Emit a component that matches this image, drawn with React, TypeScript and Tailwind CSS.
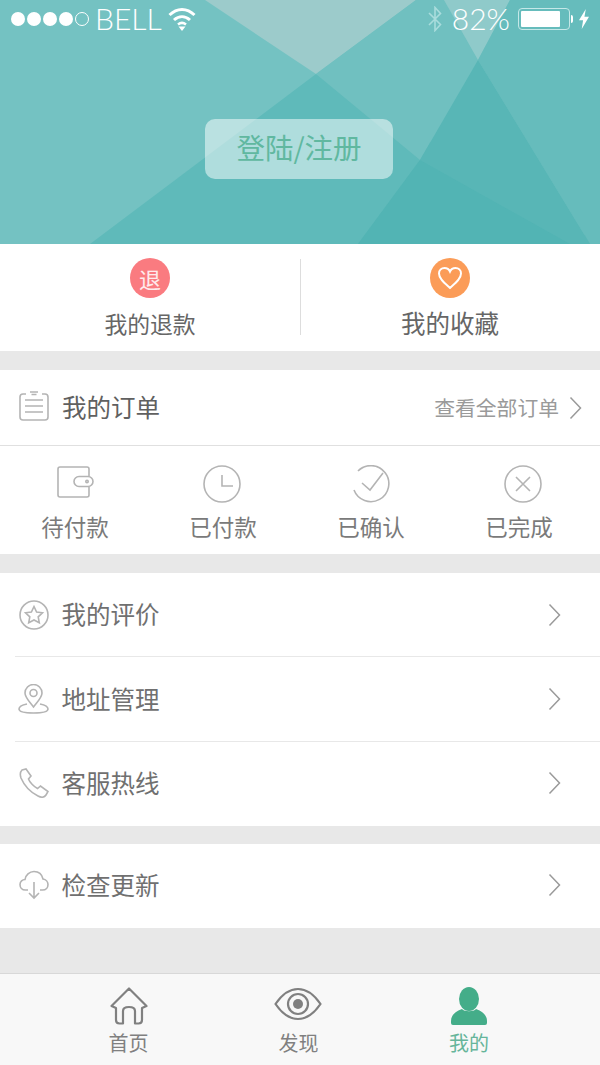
import React from "react";

const cjk = "font-['Noto_Sans_CJK_SC','Noto_Sans',sans-serif]";

function Chevron({ className = "" }: { className?: string }) {
  return (
    <svg width="13" height="24" viewBox="0 0 13 24" fill="none" stroke="#9a9a9a" strokeWidth="1.5" className={className}>
      <path d="M1.5 1.5 L11.5 12 L1.5 22.5" />
    </svg>
  );
}

function HeroBackground() {
  return (
    <svg className="absolute inset-0" width="600" height="244" viewBox="0 0 600 244">
      <rect width="600" height="244" fill="#74c2c2" />
      <polygon points="316,74 600,244 90,244" fill="#5fbaba" />
      <polygon points="205,0 416,0 316,74" fill="#9ccbcb" />
      <polygon points="416,0 444,0 478,60 420,160 316,74" fill="#70c0c0" />
      <polygon points="444,0 510,0 478,60" fill="#8fcaca" />
      <polygon points="510,0 600,0 600,244 590,244 478,60" fill="#66bcbc" />
      <polygon points="478,60 590,244 358,244 420,160" fill="#58b6b6" />
      <polygon points="420,160 570,244 358,244" fill="#52b4b4" />
    </svg>
  );
}

function StatusBar() {
  return (
    <div className="relative flex h-[37px] items-center justify-between pl-[11px] pr-[10px] text-white">
      <div className="flex items-center">
        <div className="flex items-center gap-[2px]">
          <span className="h-[14px] w-[14px] rounded-full bg-white" />
          <span className="h-[14px] w-[14px] rounded-full bg-white" />
          <span className="h-[14px] w-[14px] rounded-full bg-white" />
          <span className="h-[14px] w-[14px] rounded-full bg-white" />
          <span className="h-[14px] w-[14px] rounded-full border border-white" />
        </div>
        <span className="ml-[6px] pb-[1px] font-['Lato',sans-serif] text-[30px] font-light leading-none">BELL</span>
        <svg className="ml-[6px]" width="28" height="26" viewBox="0 0 28 26" fill="none" stroke="#fff" strokeWidth="3">
          <path d="M1.5 9 C9 1.5 19 1.5 26.5 9" />
          <path d="M6 14 C11 9.5 17 9.5 22 14" />
          <path d="M10 18.5 C12.5 16.5 15.5 16.5 18 18.5" strokeWidth="2.5" />
          <path d="M10.5 20.5 L17.5 20.5 L14 25 Z" fill="#fff" stroke="none" />
        </svg>
      </div>
      <div className="flex items-center">
        <svg width="16" height="26" viewBox="0 0 16 26" fill="none" stroke="#a9dcdc" strokeWidth="1.6">
          <path d="M2 7 L13.5 18.5 L8 24.5 L8 1.5 L13.5 7.5 L2 19" />
        </svg>
        <span className="ml-[9px] pb-[1px] font-['Lato',sans-serif] text-[30px] font-light leading-none">82%</span>
        <div className="ml-[8px] flex h-[22px] w-[52px] items-center rounded-[4px] border border-[#c5e8e8] p-[2px]">
          <div className="h-full w-[39px] rounded-[1px] bg-white" />
        </div>
        <span className="ml-[1px] h-[8px] w-[2px] rounded-r-sm bg-white" />
        <svg className="ml-[5px]" width="12" height="20" viewBox="0 0 12 22">
          <path d="M8 0 L0.5 12.5 L5 12.5 L3.5 22 L11.5 8.5 L6.5 8.5 Z" fill="#fff" />
        </svg>
      </div>
    </div>
  );
}

function QuickItem({ icon, label, large = false }: { icon: React.ReactNode; label: string; large?: boolean }) {
  return (
    <div className="flex flex-col items-center pt-[14px]">
      {icon}
      <span className={`${large ? "mt-[9px] text-[24.5px]" : "mt-[10px] text-[22.8px]"} leading-[32px] text-[#666666]`}>{label}</span>
    </div>
  );
}

function StatusItem({ icon, label }: { icon: React.ReactNode; label: string }) {
  return (
    <div className="flex flex-col items-center pt-[18px]">
      <div className="flex h-[40px] items-center justify-center">{icon}</div>
      <span className="mt-[6px] text-[22.5px] leading-[32px] text-[#7a7a7a]">{label}</span>
    </div>
  );
}

function MenuRow({
  icon,
  label,
  border = false,
  tall = false,
  lift = false,
}: {
  icon: React.ReactNode;
  label: string;
  border?: boolean;
  tall?: boolean;
  lift?: boolean;
}) {
  return (
    <div
      className={`ml-[15px] flex ${tall ? "h-[85px]" : "h-[84px]"} items-center pr-[39px] ${lift ? "pb-[2px]" : ""} ${border ? "border-b border-[#e8e8e8]" : ""}`}
    >
      <div className="flex w-[46.5px] items-center">{icon}</div>
      <span className="flex-1 text-[24.5px] text-[#707070]">{label}</span>
      <Chevron />
    </div>
  );
}

const stroke = { fill: "none", stroke: "#b4b4b4", strokeWidth: 1.6 };

export default function App() {
  return (
    <div className={`flex h-[1065px] w-[600px] flex-col overflow-hidden bg-[#e8e8e8] ${cjk}`}>
      {/* Header */}
      <div className="relative h-[244px] shrink-0">
        <HeroBackground />
        <StatusBar />
        <div className="relative ml-[205px] mt-[82px] flex h-[60px] w-[188px] items-center justify-center rounded-[10px] bg-white/50 pb-[3px] text-[28.5px] text-[#60b8a0]">
          登陆/注册
        </div>
      </div>

      {/* Refund / favourites */}
      <div className="relative grid h-[107px] shrink-0 grid-cols-2 bg-white">
        <QuickItem
          label="我的退款"
          icon={
            <div className="flex h-[40px] w-[40px] items-center justify-center rounded-full bg-[#fa7b80] text-[22px] leading-none text-white/85">
              退
            </div>
          }
        />
        <QuickItem
          label="我的收藏"
          large
          icon={
            <div className="flex h-[40px] w-[40px] items-center justify-center rounded-full bg-[#fb9c58]">
              <svg width="26" height="24" viewBox="0 0 26 24" fill="none" stroke="#fff" strokeWidth="2">
                <path d="M13 22 C8 17.5 2 13 2 7.5 C2 4 4.5 2 7.5 2 C10 2 12 3.2 13 5.5 C14 3.2 16 2 18.5 2 C21.5 2 24 4 24 7.5 C24 13 18 17.5 13 22 Z" />
              </svg>
            </div>
          }
        />
        <div className="absolute left-[300px] top-[15px] h-[76px] w-px bg-[#dddddd]" />
      </div>

      {/* Orders */}
      <div className="mt-[19px] shrink-0 bg-white">
        <div className="flex h-[76px] items-center border-b border-[#e0e0e0] pl-[19px] pr-[18px]">
          <svg className="mb-[3px]" width="30" height="30" viewBox="0 0 30 30" {...stroke}>
            <path d="M7 3 L4 3 Q1 3 1 6 L1 26 Q1 29 4 29 L26 29 Q29 29 29 26 L29 6 Q29 3 26 3 L23 3" />
            <path d="M11 1 L19 1 M12.5 3.5 L17.5 3.5 M6 9 L24 9 M6 15 L24 15 M6 21 L24 21" />
          </svg>
          <span className="ml-[13px] flex-1 pb-[1px] text-[24.5px] text-[#606060]">我的订单</span>
          <span className="text-[20.8px] text-[#9a9a9a]">查看全部订单</span>
          <Chevron className="ml-[10px]" />
        </div>
        <div className="grid h-[108px] grid-cols-4 pl-px pr-[7px]">
          <StatusItem
            label="待付款"
            icon={
              <svg className="mb-[5px]" width="37" height="32" viewBox="0 0 37 32" {...stroke}>
                <path d="M32 10 L32 3 Q32 1 30 1 L3 1 Q1 1 1 3 L1 29 Q1 31 3 31 L30 31 Q32 31 32 29 L32 21" />
                <rect x="17" y="10.5" width="19" height="10" rx="5" />
                <circle cx="30" cy="15.5" r="1.2" />
              </svg>
            }
          />
          <StatusItem
            label="已付款"
            icon={
              <svg className="mr-[2px]" width="38" height="38" viewBox="0 0 38 38" {...stroke}>
                <circle cx="19" cy="19" r="18" />
                <path d="M19 10 L19 21 L30 21" />
              </svg>
            }
          />
          <StatusItem
            label="已确认"
            icon={
              <svg width="38" height="38" viewBox="0 0 38 38" {...stroke}>
                <path d="M6 6 A18 18 0 1 1 2 25" />
                <path d="M10 18 L18 25 L31 8" />
              </svg>
            }
          />
          <StatusItem
            label="已完成"
            icon={
              <svg className="ml-[8px]" width="38" height="38" viewBox="0 0 38 38" {...stroke}>
                <circle cx="19" cy="19" r="18" />
                <path d="M12 12 L26 26 M26 12 L12 26" />
              </svg>
            }
          />
        </div>
      </div>

      {/* Menu */}
      <div className="mt-[19px] shrink-0 bg-white">
        <MenuRow
          border
          label="我的评价"
          icon={
            <svg className="ml-[4px]" width="30" height="30" viewBox="0 0 30 30" {...stroke}>
              <circle cx="15" cy="15" r="14" />
              <path d="M15 6.5 L17.6 12 L23.5 12.8 L19.2 16.9 L20.3 22.8 L15 20 L9.7 22.8 L10.8 16.9 L6.5 12.8 L12.4 12 Z" />
            </svg>
          }
        />
        <MenuRow
          border
          tall
          label="地址管理"
          icon={
            <svg className="ml-[3px]" width="31" height="30" viewBox="0 0 31 30" {...stroke}>
              <path d="M15.5 23 C11 17 7 13.5 7 9 A8.5 8.5 0 0 1 24 9 C24 13.5 20 17 15.5 23 Z" />
              <circle cx="15.5" cy="9" r="3.5" />
              <path d="M9 20 C4 21 1 23 1 25 C1 27.5 7 29 15.5 29 C24 29 30 27.5 30 25 C30 23 27 21 22 20" />
            </svg>
          }
        />
        <MenuRow
          lift
          label="客服热线"
          icon={
            <svg className="ml-[4px]" width="30" height="30" viewBox="0 0 30 30" {...stroke}>
              <path d="M3 2 L7 1 L12 8 L9.5 11 C10.5 14 15 19 18.5 20.5 L21.5 18 L29 23.5 L27 27 C25.5 29.5 22 29.5 19 28 C11 24 5 17 2 10 C1 7 1 4 3 2 Z" />
            </svg>
          }
        />
      </div>

      {/* Update */}
      <div className="mt-[18px] shrink-0 bg-white">
        <MenuRow
          lift
          label="检查更新"
          icon={
            <svg className="ml-[4px]" width="30" height="30" viewBox="0 0 30 30" {...stroke}>
              <path d="M9 20 L6.5 20 C3 20 1 17.5 1 14.5 C1 11.5 3.5 9.5 6 9.5 C6.5 5 10.5 1.5 15 1.5 C19.5 1.5 23 4.5 24 9 C27 9.5 29 12 29 14.5 C29 17.5 27 20 23.5 20 L21 20" />
              <path d="M15 12 L15 28 M10 23 L15 28 L20 23" />
            </svg>
          }
        />
      </div>

      {/* Tab bar */}
      <div className="mt-auto grid h-[92px] shrink-0 grid-cols-[169px_171px_170px] border-t border-[#d8d8d8] bg-[#f8f8f8] pl-[44px] text-[20px]">
        <div className="flex flex-col items-center pt-[13px]">
          <svg width="38" height="38" viewBox="0 0 38 38" fill="none" stroke="#808080" strokeWidth="2.2" strokeLinejoin="round">
            <path d="M19 1.5 L36.5 19 L32 21 L32 33 Q32 36.5 28.5 36.5 L25 36.5 L25 24 Q25 20 19 20 Q13 20 13 24 L13 36.5 L9.5 36.5 Q6 36.5 6 33 L6 21 L1.5 19 Z" />
          </svg>
          <span className="mt-[4px] leading-[28px] text-[#808080]">首页</span>
        </div>
        <div className="flex flex-col items-center pt-[13px]">
          <svg className="mr-[2px]" width="48" height="34" viewBox="0 0 48 34" fill="none" stroke="#808080" strokeWidth="2.2">
            <path d="M1.5 17 C9 6 16 2 24 2 C32 2 39 6 46.5 17 C39 28 32 32 24 32 C16 32 9 28 1.5 17 Z" />
            <circle cx="24" cy="17" r="10" />
            <circle cx="24" cy="17" r="5" fill="#808080" stroke="none" />
          </svg>
          <span className="mt-[8px] leading-[28px] text-[#808080]">发现</span>
        </div>
        <div className="flex flex-col items-center pt-[13px]">
          <svg width="36" height="38" viewBox="0 0 36 38" fill="#44ad89">
            <ellipse cx="18" cy="12" rx="10" ry="12" />
            <path d="M11 22 C13 25 23 25 25 22 C31 24 36 28 36 34 L36 36 Q36 38 34 38 L2 38 Q0 38 0 36 L0 34 C0 28 5 24 11 22 Z" />
          </svg>
          <span className="mt-[4px] leading-[28px] text-[#66b59a]">我的</span>
        </div>
      </div>
    </div>
  );
}
